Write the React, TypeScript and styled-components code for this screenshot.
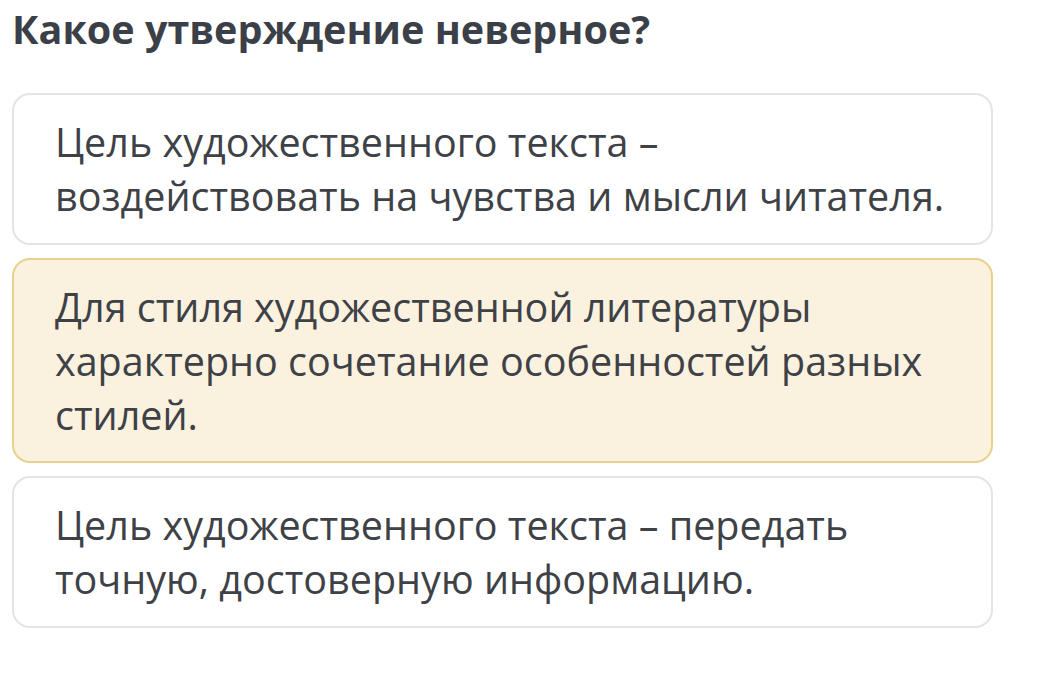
import React from 'react'
import styled, { createGlobalStyle } from 'styled-components'

const Global = createGlobalStyle`
  html, body {
    margin: 0;
    padding: 0;
    background: #ffffff;
  }
`

const options = [
  { id: 1, text: 'Цель художественного текста – воздействовать на чувства и мысли читателя.', selected: false },
  { id: 2, text: 'Для стиля художественной литературы характерно сочетание особенностей разных стилей.', selected: true },
  { id: 3, text: 'Цель художественного текста – передать точную, достоверную информацию.', selected: false },
]

const App = () => {
  return (
    <Page>
      <Global />
      <Question>Какое утверждение неверное?</Question>
      <List>
        {options.map((o) => (
          <Option key={o.id} $selected={o.selected}>
            {o.text}
          </Option>
        ))}
      </List>
    </Page>
  )
}

export default App

const Page = styled.div`
  width: 1042px;
  height: 675px;
  padding: 0 0 0 12px;
  box-sizing: border-box;
  font-family: 'Open Sans', 'Noto Sans', sans-serif;
`

const Question = styled.div`
  font-size: 39.5px;
  font-weight: 700;
  color: #3b3f47;
  line-height: 58px;
  margin-bottom: 35px;
`

const List = styled.div`
  display: flex;
  flex-direction: column;
  gap: 13px;
  width: 981px;
`

const Option = styled.div<{ $selected: boolean }>`
  border: 2.5px solid ${(p) => (p.$selected ? '#e9d08f' : '#e2e4e7')};
  background: ${(p) => (p.$selected ? '#faf1df' : '#ffffff')};
  border-radius: 18px;
  padding: 20px 38px 19.5px 41px;
  font-size: 39.5px;
  line-height: 54px;
  color: #3e4146;
`
